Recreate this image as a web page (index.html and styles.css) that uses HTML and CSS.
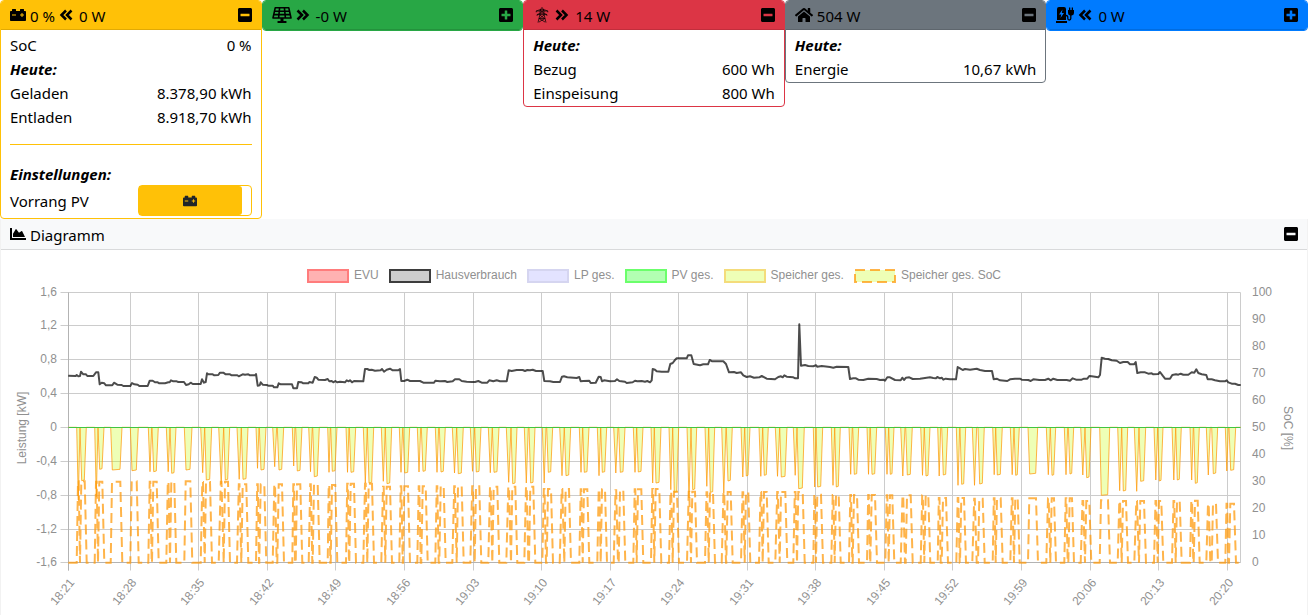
FILE: index.html
```
<!DOCTYPE html>
<html lang="de">
	<head>
		<meta charset="utf-8">
		<meta name="viewport" content="width=device-width, initial-scale=1">
		<title>Energie Übersicht</title>
		<link rel="stylesheet" href="styles.css">
	</head>
	<body>

		<!-- icons -->
		<svg class="sprite" aria-hidden="true">
			<symbol id="battery" viewBox="0 0 512 512"><path d="M480 128h-32V80c0-8.84-7.16-16-16-16h-96c-8.84 0-16 7.16-16 16v48H192V80c0-8.84-7.16-16-16-16H80c-8.84 0-16 7.16-16 16v48H32c-17.67 0-32 14.33-32 32v256c0 17.67 14.33 32 32 32h448c17.67 0 32-14.33 32-32V160c0-17.67-14.33-32-32-32zM192 264c0 4.42-3.58 8-8 8H72c-4.42 0-8-3.58-8-8v-16c0-4.42 3.58-8 8-8h112c4.42 0 8 3.58 8 8v16zm256 0c0 4.42-3.58 8-8 8h-40v40c0 4.42-3.58 8-8 8h-16c-4.42 0-8-3.58-8-8v-40h-40c-4.42 0-8-3.58-8-8v-16c0-4.42 3.58-8 8-8h40v-40c0-4.42 3.58-8 8-8h16c4.42 0 8 3.58 8 8v40h40c4.42 0 8 3.58 8 8v16z"/></symbol>
			<symbol id="minus" viewBox="0 0 448 512"><path d="M400 32H48C21.5 32 0 53.5 0 80v352c0 26.5 21.5 48 48 48h352c26.5 0 48-21.5 48-48V80c0-26.5-21.5-48-48-48zM92 296c-6.6 0-12-5.4-12-12v-56c0-6.6 5.4-12 12-12h264c6.6 0 12 5.4 12 12v56c0 6.6-5.4 12-12 12H92z"/></symbol>
			<symbol id="plus" viewBox="0 0 448 512"><path d="M400 32H48C21.5 32 0 53.5 0 80v352c0 26.5 21.5 48 48 48h352c26.5 0 48-21.5 48-48V80c0-26.5-21.5-48-48-48zm-32 252c0 6.6-5.4 12-12 12h-92v92c0 6.6-5.4 12-12 12h-56c-6.6 0-12-5.4-12-12v-92H92c-6.6 0-12-5.4-12-12v-56c0-6.6 5.4-12 12-12h92v-92c0-6.6 5.4-12 12-12h56c6.6 0 12 5.4 12 12v92h92c6.6 0 12 5.4 12 12v56z"/></symbol>
			<symbol id="area" viewBox="0 0 512 512"><path d="M500 384c6.6 0 12 5.4 12 12v40c0 6.6-5.4 12-12 12H12c-6.6 0-12-5.4-12-12V76c0-6.6 5.4-12 12-12h40c6.6 0 12 5.4 12 12v308h436zM372.7 159.5L288 216l-85.3-113.7c-5.1-6.8-15.5-6.3-19.9 1L96 248v104h384l-89.9-187.8c-3.2-6.5-11.4-8.7-17.4-4.7z"/></symbol>
			<symbol id="home" viewBox="0 0 576 512"><path d="M280.37 148.26L96 300.11V464a16 16 0 0 0 16 16l112.06-.29a16 16 0 0 0 15.92-16V368a16 16 0 0 1 16-16h64a16 16 0 0 1 16 16v95.64a16 16 0 0 0 16 16.05L464 480a16 16 0 0 0 16-16V300L295.67 148.26a12.19 12.19 0 0 0-15.3 0zM571.6 251.47L488 182.56V44.05a12 12 0 0 0-12-12h-56a12 12 0 0 0-12 12v72.61L318.47 43a48 48 0 0 0-61 0L4.34 251.47a12 12 0 0 0-1.6 16.9l25.5 31A12 12 0 0 0 45.15 301l235.22-193.74a12.19 12.19 0 0 1 15.3 0L530.9 301a12 12 0 0 0 16.9-1.6l25.5-31a12 12 0 0 0-1.7-16.93z"/></symbol>
			<symbol id="left" viewBox="0 0 14 16"><path d="M7 3.5L2.5 8L7 12.5M12.5 3.5L8 8l4.5 4.5" fill="none" stroke="currentColor" stroke-width="2.5"/></symbol>
			<symbol id="right" viewBox="0 0 14 16"><path d="M1.5 3.5L6 8l-4.5 4.5M7 3.5L11.5 8L7 12.5" fill="none" stroke="currentColor" stroke-width="2.5"/></symbol>
			<symbol id="solar" viewBox="0 0 20 16"><path d="M3.2 .8h13.6L19 11H1zM2.2 4.2h15.6M1.6 7.6h16.8M7.6 .8L6.6 11M12.4 .8l1 10.2" fill="none" stroke="currentColor" stroke-width="1.6" stroke-linejoin="round"/><path d="M8.5 11h3v3h2.2q1 0 1 1t-1 1H6.300q-1 0-1-1t1-1h2.200z"/></symbol>
			<symbol id="pylon" viewBox="0 0 14 18"><path d="M7 .5L4.800 3.500V8L2.500 17.500M7 .5l2.200 3V8l2.300 9.500M.5 6V4.500l4.300-1.500h4.400l4.300 1.500V6M1.500 10V8.500L4.800 7h4.400l3.300 1.500V10M.5 4.500h13M1.500 8.500h11M4.800 3.500L9.200 7M9.200 3.500L4.800 7M4.500 9l5.500 4-6.500 4M9.500 9L4 13l6.500 4M3.500 13h7" fill="none" stroke="currentColor" stroke-width=".8"/></symbol>
			<symbol id="station" viewBox="0 0 18 16"><path fill-rule="evenodd" d="M1 2q0-2 2-2h5q2 0 2 2v11H1zM6.500 2.500L3 7.500h2.300L4.500 11 8 6H5.800z"/><path d="M0 14h11v2H0zM12 3h6v3q0 2-2.200 2.500h-1.600Q12 8 12 6zM13 .5h1.300V3H13zM15.700 .5H17V3h-1.300z"/><path d="M10 8.500q1.800 0 1.800 2v1q0 1.500 1.500 1.500t1.500-1.500V8" fill="none" stroke="currentColor" stroke-width="1.300"/></symbol>
		</svg>

		<main class="cards">
			<!-- Speicher -->
			<section class="card storage">
				<header class="card-head">
					<svg class="icon"><use href="#battery"/></svg>
					<span>0 %</span>
					<svg class="icon arrow"><use href="#left"/></svg>
					<span>0 W</span>
					<button class="fold" type="button" aria-label="Einklappen"><svg class="icon small"><use href="#minus"/></svg></button>
				</header>
				<div class="card-body">
					<div class="row"><span>SoC</span><span>0 %</span></div>
					<div class="row title">Heute:</div>
					<div class="row"><span>Geladen</span><span>8.378,90 kWh</span></div>
					<div class="row"><span>Entladen</span><span>8.918,70 kWh</span></div>
					<hr>
					<div class="row title settings-title">Einstellungen:</div>
					<div class="row setting">
						<label for="vorrang">Vorrang PV</label>
						<span class="toggle">
							<input type="checkbox" id="vorrang" checked>
							<span class="toggle-on"><svg class="icon small"><use href="#battery"/></svg></span>
						</span>
					</div>
				</div>
			</section>

			<!-- PV -->
			<section class="card pv">
				<header class="card-head">
					<svg class="icon wide"><use href="#solar"/></svg>
					<svg class="icon arrow"><use href="#right"/></svg>
					<span>-0 W</span>
					<button class="fold" type="button" aria-label="Ausklappen"><svg class="icon small"><use href="#plus"/></svg></button>
				</header>
			</section>

			<!-- EVU -->
			<section class="card grid-power">
				<header class="card-head">
					<svg class="icon home"><use href="#pylon"/></svg>
					<svg class="icon arrow"><use href="#right"/></svg>
					<span>14 W</span>
					<button class="fold" type="button" aria-label="Einklappen"><svg class="icon small"><use href="#minus"/></svg></button>
				</header>
				<div class="card-body">
					<div class="row title">Heute:</div>
					<div class="row"><span>Bezug</span><span>600 Wh</span></div>
					<div class="row"><span>Einspeisung</span><span>800 Wh</span></div>
				</div>
			</section>

			<!-- Hausverbrauch -->
			<section class="card house">
				<header class="card-head">
					<svg class="icon home"><use href="#home"/></svg>
					<span>504 W</span>
					<button class="fold" type="button" aria-label="Einklappen"><svg class="icon small"><use href="#minus"/></svg></button>
				</header>
				<div class="card-body">
					<div class="row title">Heute:</div>
					<div class="row"><span>Energie</span><span>10,67 kWh</span></div>
				</div>
			</section>

			<!-- Ladepunkte -->
			<section class="card charge">
				<header class="card-head">
					<svg class="icon home"><use href="#station"/></svg>
					<svg class="icon arrow"><use href="#left"/></svg>
					<span>0 W</span>
					<button class="fold" type="button" aria-label="Ausklappen"><svg class="icon small"><use href="#plus"/></svg></button>
				</header>
			</section>
		</main>

		<!-- Diagramm -->
		<section class="diagram">
			<header class="diagram-head">
				<svg class="icon"><use href="#area"/></svg>
				<span>Diagramm</span>
				<button class="fold" type="button" aria-label="Einklappen"><svg class="icon small"><use href="#minus"/></svg></button>
			</header>
			<ul class="legend">
				<li><i class="swatch evu"></i>EVU</li>
				<li><i class="swatch haus"></i>Hausverbrauch</li>
				<li><i class="swatch lp"></i>LP ges.</li>
				<li><i class="swatch solar"></i>PV ges.</li>
				<li><i class="swatch speicher"></i>Speicher ges.</li>
				<li><svg class="swatch-soc" viewBox="0 0 42 14"><rect x="1" y="1" width="40" height="12"/></svg>Speicher ges. SoC</li>
			</ul>
			<svg class="chart" id="chart" viewBox="1 283 1306 332"></svg>
		</section>

		<script src="chart.js"></script>
	</body>
</html>
```
FILE: styles.css
```
* {
	box-sizing: border-box;
}

body {
	margin: 0;
	background-color: #fff;
	color: #000;
	font: 15px/24px "Noto Sans", "Open Sans", sans-serif;
}

.sprite {
	display: none;
}

/* icons */
.icon {
	width: 16px;
	height: 16px;
	flex: none;
	fill: currentColor;
}
.icon.arrow {
	width: 14px;
	margin-right: 2px;
}
.icon.small {
	width: 14px;
}
.icon.home {
	width: 18px;
}
.icon.wide {
	width: 20px;
}

/* cards */
.cards {
	display: grid;
	grid-template-columns: repeat(5, 1fr);
	align-items: start;
}
.card {
	border: 1px solid var(--color);
	border-radius: 4px;
	overflow: hidden;
}
.storage { --color: #ffc107; }
.pv { --color: #28a745; }
.grid-power { --color: #dc3545; }
.house { --color: #6c757d; }
.charge { --color: #007bff; }

.card-head,
.diagram-head {
	display: flex;
	align-items: center;
	gap: 4px;
	height: 29px;
	padding: 0 9px;
	border-bottom: 1px solid rgba(0, 0, 0, .12);
}
.card-head span,
.diagram-head span {
	padding-top: 2px;
}
.card-head {
	background-color: var(--color);
}
.fold {
	display: flex;
	margin-left: auto;
	padding: 0;
	border: 0;
	background: none;
	color: #000;
	cursor: pointer;
}
.card-body {
	padding: 3px 9px 1px;
}
.row {
	display: flex;
	justify-content: space-between;
}
.title {
	font-weight: bold;
	font-style: italic;
}
hr {
	margin: 15px 0 17px;
	border: 0;
	border-top: 1px solid var(--color);
}

/* switch */
.settings-title {
	height: 23px;
}
.setting {
	align-items: center;
	padding-bottom: 1px;
}
.toggle {
	position: relative;
	display: flex;
	width: 47%;
	height: 31px;
	border: 1px solid var(--color);
	border-radius: 4px;
}
.toggle input {
	position: absolute;
	inset: 0;
	width: 100%;
	height: 100%;
	margin: 0;
	opacity: 0;
	cursor: pointer;
}
.toggle-on {
	display: flex;
	align-items: center;
	justify-content: center;
	flex: 1;
	margin-right: 9px;
	border-radius: 0 3px 3px 0;
	background-color: var(--color);
	color: #212529;
}

/* diagram */
.diagram {
	border: solid rgba(0, 0, 0, .05);
	border-width: 0 1px;
}
.diagram-head {
	height: 31px;
	background-color: #f8f9fa;
}
.legend {
	display: flex;
	flex-wrap: wrap;
	justify-content: center;
	gap: 10px;
	margin: 0;
	padding: 19px 0 0;
	list-style: none;
	color: #909090;
	font: 12px/12px "Liberation Sans", Arial, sans-serif;
}
.legend li {
	display: flex;
	gap: 5px;
}
.swatch {
	width: 42px;
	height: 14px;
	border: 2px solid;
}
.evu {
	border-color: rgba(255, 0, 0, .3);
	background-color: rgba(255, 0, 0, .3);
}
.haus {
	border-color: rgba(0, 0, 0, .7);
	background-color: rgba(0, 0, 0, .2);
}
.lp {
	border-color: rgba(0, 0, 0, .06);
	background-color: rgba(0, 0, 255, .11);
}
.solar {
	border-color: rgba(0, 255, 0, .4);
	background-color: rgba(0, 255, 0, .3);
}
.speicher {
	border-color: rgba(255, 155, 13, .35);
	background-color: rgba(200, 255, 13, .3);
}
.swatch-soc {
	width: 42px;
	height: 14px;
	fill: rgba(200, 255, 13, .3);
	stroke: rgba(255, 155, 13, .75);
	stroke-width: 2;
	stroke-dasharray: 10 5;
}

.chart {
	display: block;
	width: 100%;
	height: auto;
	fill: none;
	font: 12px "Liberation Sans", Arial, sans-serif;
}
.chart text {
	fill: #909090;
}
.grid {
	stroke: #ccc;
}
.axis {
	stroke: #b3b3b3;
}
.zero {
	stroke: #41c441;
}
.line-haus {
	stroke: rgba(0, 0, 0, .7);
	stroke-width: 2;
	stroke-linejoin: round;
}
.line-speicher {
	fill: rgba(200, 255, 13, .3);
	stroke: rgba(255, 155, 13, .75);
	stroke-linejoin: round;
}
.line-soc {
	stroke: rgba(255, 155, 13, .75);
	stroke-width: 2;
	stroke-dasharray: 10 5;
}
```
FILE: chart.js
```
// plot area
const LEFT = 68;
const RIGHT = 1240;
const TOP = 292;
const ZERO = 427;
const BOTTOM = 562;

// values are stored in thirds of a chart unit, y counted down from zero line
const STEP = 3;
const FLOOR = 407;

// [start, end, depth of the short pulse, start, end, depth of the long pulse, SoC top]
// a short pulse of 0 means that there is only the long one
const blocks = [
	{ offset: 0, zero: 441, pulses: [
		[230, 240, 660, 240, 259, 602, 604], [284, 294, 650, 294, 312, 568, 605],
		[0, 0, 0, 332, 366, 570, 605], [0, 0, 0, 391, 415, 572, 604],
		[445, 455, 575, 456, 475, 575, 605], [499, 510, 575, 510, 528, 580, 605],
		[0, 0, 0, 553, 576, 570, 604], [602, 614, 578, 614, 635, 600, 606],
		[656, 671, 612, 671, 689, 600, 605], [711, 724, 598, 724, 744, 598, 613],
		[768, 777, 565, 778, 798, 570, 613], [818, 830, 560, 832, 851, 570, 613],
		[877, 885, 558, 887, 906, 573, 613], [926, 937, 575, 938, 958, 590, 613],
		[983, 991, 577, 992, 1011, 574, 615]
	] },
	{ offset: 990, zero: 262, pulses: [
		[48, 57, 398, 58, 77, 398, 432], [100, 112, 430, 112, 131, 430, 432],
		[154, 166, 425, 166, 185, 432, 441], [208, 218, 398, 219, 239, 400, 440],
		[262, 272, 397, 274, 292, 395, 440], [316, 326, 398, 328, 346, 397, 440],
		[367, 380, 400, 380, 400, 402, 440], [421, 434, 395, 434, 453, 397, 440],
		[475, 487, 399, 487, 507, 398, 441], [529, 543, 428, 543, 561, 432, 441],
		[583, 595, 430, 597, 615, 430, 441], [637, 648, 430, 650, 668, 398, 448],
		[689, 703, 408, 703, 722, 408, 448], [748, 758, 398, 758, 777, 398, 449],
		[802, 812, 408, 812, 830, 398, 449], [851, 864, 400, 866, 885, 398, 452],
		[910, 920, 398, 920, 939, 397, 449], [963, 973, 430, 973, 993, 430, 448]
	] },
	{ offset: 1950, zero: 352, pulses: [
		[57, 68, 540, 68, 86, 548, 546], [111, 123, 565, 123, 140, 540, 546],
		[165, 176, 530, 176, 194, 548, 548], [215, 228, 550, 229, 247, 514, 547],
		[273, 284, 502, 284, 300, 499, 548], [327, 338, 500, 338, 355, 497, 547],
		[376, 389, 500, 389, 411, 502, 547], [430, 441, 497, 441, 463, 537, 547],
		[490, 498, 532, 498, 518, 532, 555], [544, 554, 527, 554, 571, 532, 556],
		[597, 607, 494, 608, 626, 494, 556], [651, 660, 494, 661, 680, 494, 556],
		[706, 716, 494, 716, 732, 494, 557], [752, 765, 499, 767, 787, 496, 557],
		[812, 823, 497, 823, 840, 499, 557], [863, 872, 499, 875, 893, 496, 565],
		[919, 929, 527, 930, 947, 524, 565]
	] },
	{ offset: 2910, zero: 441, pulses: [
		[7, 20, 616, 24, 43, 612, 656], [68, 77, 584, 77, 97, 585, 655],
		[121, 132, 584, 132, 148, 586, 655], [0, 0, 0, 174, 203, 582, 655],
		[229, 241, 584, 241, 257, 586, 655], [283, 293, 584, 295, 311, 582, 655],
		[332, 345, 585, 345, 363, 593, 663], [0, 0, 0, 389, 419, 646, 661],
		[443, 455, 632, 455, 473, 633, 663], [493, 507, 634, 507, 527, 604, 663],
		[552, 563, 600, 563, 579, 603, 663], [606, 617, 600, 617, 634, 600, 663],
		[660, 670, 600, 671, 688, 610, 662], [709, 721, 585, 725, 743, 581, 671],
		[766, 775, 573, 777, 797, 571, 671]
	] }
];

// Hausverbrauch, x,y pairs per block
const haus = [
	"205,287 227,288 230,285 235,289 240,288 243,275 250,283 258,283 262,288 280,288 288,277 295,277 299,313 305,308 313,310 318,316 337,316 342,308 352,314 365,315 370,318 391,318 396,309 403,313 413,314 418,318 443,318 449,302 458,302 465,307 473,307 478,310 495,310 505,307 509,307 513,301 520,304 530,304 535,306 552,306 558,315 566,313 572,308 578,312 602,312 606,298 612,308 617,306 621,280 625,283 638,283 643,286 655,285 660,278 670,278 677,283 690,283 695,286 712,286 716,289 728,283 735,284 745,283 750,286 765,286 768,282 773,317 779,316 782,307 788,314 800,315 805,317 818,317 822,322 832,322 836,310 842,313 876,313 880,325 891,325 895,306 905,307 910,310 925,310 928,306 938,308 944,291 950,293 955,299 975,300 983,297 988,304 995,303",
	"10,128 16,124 22,128 30,126 45,128 50,122 56,125 60,122 66,128 72,124 100,125 105,88 112,88 118,91 125,90 135,93 152,92 156,88 162,96 170,90 180,87 188,92 205,92 210,88 214,124 222,124 232,120 240,124 270,124 280,129 312,129 316,123 330,125 345,124 352,127 368,125 375,119 388,119 395,124 410,126 425,127 435,127 445,124 455,129 472,129 478,122 490,125 500,122 510,125 530,125 536,92 545,94 560,91 578,91 585,94 592,91 600,92 608,90 618,94 638,94 643,124 660,125 670,127 690,127 696,111 702,110 712,113 740,115 748,112 752,125 760,124 778,123 782,130 797,129 806,111 812,112 816,125 822,122 840,125 855,124 861,119 868,124 885,126 890,130 908,128 915,123 922,125 935,124 945,126 952,124 960,128 965,122 968,88 975,90 980,95",
	"35,186 55,186 61,163 68,160 74,152 80,146 110,146 114,137 124,137 131,163 150,167 160,164 174,164 179,151 187,155 220,155 228,163 237,188 252,187 260,190 273,188 280,197 290,202 300,200 312,204 328,203 335,199 350,207 375,209 385,202 393,200 398,203 403,197 410,201 430,203 436,206 444,206 448,44 453,168 465,166 475,169 490,170 498,167 502,171 515,169 540,172 550,174 560,171 595,172 600,208 610,206 618,206 625,210 640,211 655,207 680,208 690,211 700,210 705,213 712,203 720,203 735,211 752,212 757,204 762,211 768,204 778,203 788,208 810,207 840,203 850,205 858,206 862,202 870,206 875,204 880,210 887,207 900,209 918,209 923,172 930,176 938,181 945,178",
	"0,269 20,266 30,270 45,273 66,273 71,298 80,296 90,301 112,303 120,298 135,296 150,296 155,299 175,300 182,303 190,298 208,300 225,300 235,296 242,301 250,296 262,300 290,300 300,302 308,295 318,299 335,299 342,296 352,296 358,288 365,289 385,292 390,285 395,233 405,236 415,237 425,241 440,242 450,249 460,246 473,246 480,253 492,253 497,246 502,279 512,277 525,277 535,281 545,280 550,283 565,282 570,276 578,287 585,296 600,296 607,285 618,283 625,284 632,281 640,284 655,284 665,277 673,278 679,268 685,279 695,283 709,285 713,298 725,298 735,301 750,304 765,304 770,301 775,307 785,311 795,311 805,315 812,315"
];

const times = ["18:21", "18:28", "18:35", "18:42", "18:49", "18:56", "19:03", "19:10", "19:17",
	"19:24", "19:31", "19:38", "19:45", "19:52", "19:59", "20:06", "20:13", "20:20"];
const timeX = [68, 130, 198, 267, 335, 404, 473, 541, 610, 678, 747, 815, 884, 952, 1021, 1090, 1158, 1227];
const power = ["1,6", "1,2", "0,8", "0,4", "0", "-0,4", "-0,8", "-1,2", "-1,6"];
const powerY = [292, 325, 359, 393, 427, 461, 495, 529, 562];

const chart = document.getElementById("chart");

function add(tag, attrs, text) {
	const el = document.createElementNS("http://www.w3.org/2000/svg", tag);
	for (const key in attrs) {
		el.setAttribute(key, attrs[key]);
	}
	if (text) {
		el.textContent = text;
	}
	chart.appendChild(el);
}

function line(x1, y1, x2, y2, name) {
	add("line", { x1: x1 + .5, y1: y1 + .5, x2: x2 + .5, y2: y2 + .5, class: name });
}

function polyline(points, name) {
	const list = points.map(p => (p[0] / STEP).toFixed(1) + "," + (ZERO + p[1] / STEP).toFixed(1));
	add("polyline", { points: list.join(" "), class: name });
}

// grid and axis labels
power.forEach((label, i) => {
	line(LEFT - 8, powerY[i], RIGHT, powerY[i], "grid");
	add("text", { x: LEFT - 11, y: powerY[i] + 4, "text-anchor": "end" }, label);
});
times.forEach((label, i) => {
	const x = timeX[i];
	line(x, TOP, x, BOTTOM + 8, "grid");
	add("text", { "text-anchor": "end", transform: `translate(${x + 7} 583) rotate(-50)` }, label);
});
for (let i = 0; i <= 10; i++) {
	add("text", { x: RIGHT + 12, y: Math.ceil(BOTTOM + 4 - i * 27) }, String(i * 10));
}
line(LEFT, TOP, LEFT, BOTTOM + 8, "axis");
line(LEFT, BOTTOM, RIGHT, BOTTOM, "axis");
line(RIGHT, TOP, RIGHT, BOTTOM, "grid");
add("text", { "text-anchor": "middle", transform: "translate(26 428) rotate(-90)" }, "Leistung [kW]");
add("text", { "text-anchor": "middle", transform: "translate(1284 428) rotate(90)" }, "SoC [%]");

// Speicher and SoC
const storage = [[205, 1]];
const soc = [[205, FLOOR]];
blocks.forEach(block => {
	block.pulses.forEach(([a, b, low, c, d, deep, top]) => {
		const o = block.offset;
		const y = top - block.zero;
		if (a) {
			const mid = (a + b) / 2;
			storage.push([o + a, 1], [o + mid, low - block.zero], [o + b, 1]);
			soc.push([o + a, FLOOR], [o + mid - 1, y], [o + mid + 1, y], [o + b, FLOOR]);
		}
		storage.push([o + c, 1], [o + c + 5, deep - block.zero], [o + d - 6, deep - block.zero - 2], [o + d, 1]);
		soc.push([o + c, FLOOR], [o + c + 4, y], [o + d - 5, y], [o + d + 1, FLOOR]);
	});
});
storage.push([3722, 1]);
soc.push([3722, FLOOR]);
polyline(soc, "line-soc");
polyline(storage, "line-speicher");
line(LEFT, ZERO, RIGHT, ZERO, "zero");

polyline(haus.flatMap((text, i) => text.split(" ").map(pair => {
	const [x, y] = pair.split(",").map(Number);
	return [blocks[i].offset + x, y - blocks[i].zero];
})), "line-haus");
```
